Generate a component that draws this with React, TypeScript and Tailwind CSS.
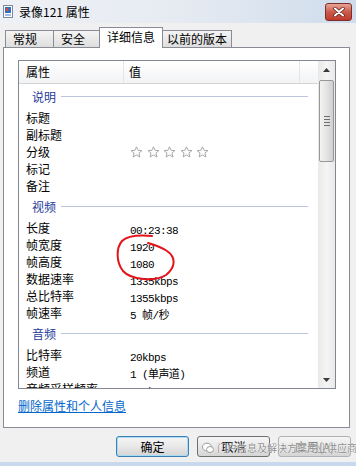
import React from "react";

const mono = "font-['Liberation_Mono','Noto_Sans_CJK_SC',monospace] text-[11px] tracking-[-0.6px]";

function Star() {
  return (
    <svg width="13" height="12" viewBox="0 0 13 12" className="mr-[3.5px]">
      <polygon
        points="6.5,0.8 8.1,4.3 11.9,4.6 9,7.1 9.9,11 6.5,9 3.1,11 4,7.1 1.1,4.6 4.9,4.3"
        fill="#fbfbfb"
        stroke="#a9a9a9"
        strokeWidth="1"
        strokeLinejoin="round"
      />
    </svg>
  );
}

function Group({ label }: { label: string }) {
  return (
    <div className="h-[25px] shrink-0 flex items-center pl-[13px] pr-[10px]">
      <span className="text-[12px] text-[#1e3a9a] leading-none">{label}</span>
      <div className="flex-1 h-px bg-[#b9c6de] ml-[5px]" />
    </div>
  );
}

function Row({ label, value }: { label: string; value?: React.ReactNode }) {
  return (
    <div className="h-[17px] shrink-0 flex items-center">
      <div className="w-[111px] pl-[7px] text-[12px] leading-none">{label}</div>
      <div className="flex-1 leading-none">{value}</div>
    </div>
  );
}

function Btn({ children, main, disabled }: { children: React.ReactNode; main?: boolean; disabled?: boolean }) {
  return (
    <div
      className={
        "w-[73px] h-[21px] rounded-[3px] border flex items-center justify-center text-[12px] bg-linear-to-b from-[#f6f6f6] via-[#e8e8e8] to-[#d4d4d4] " +
        (main
          ? "border-[#3c7fb1] shadow-[inset_0_0_0_1px_#a8dcf5]"
          : disabled
          ? "border-[#adb2b5] text-[#838383]"
          : "border-[#707070]")
      }
    >
      {children}
    </div>
  );
}

export default function App() {
  return (
    <div className="relative w-[356px] h-[466px] overflow-hidden bg-[#f0f0f0] font-['Noto_Sans_CJK_SC',sans-serif] text-black flex flex-col">
      {/* title bar */}
      <div className="h-[23px] shrink-0 flex items-center pl-[3px] pr-[4px] bg-linear-to-r from-[#eef1f5] via-[#e6ebf2] to-[#cfdcec]">
        <svg width="10" height="13" viewBox="0 0 10 13">
          <rect x="0.5" y="0.5" width="9" height="12" fill="#fff" stroke="#7d8a99" />
          <rect x="2" y="2" width="6" height="6" fill="#2f6fc4" />
          <rect x="3" y="3" width="2" height="3" fill="#e04a3a" />
          <rect x="2" y="9.5" width="6" height="1" fill="#4a7fc4" />
        </svg>
        <span className="ml-[6px] text-[12px] leading-none">录像121 属性</span>
        <div className="ml-auto w-[27px] h-[18px] rounded-[3px] border border-[#7a2f2a] bg-linear-to-b from-[#e7a598] via-[#cb5a4c] to-[#c0392b] flex items-center justify-center">
          <svg width="12" height="10" viewBox="0 0 12 10">
            <path d="M2 1.5 L10 8.5 M10 1.5 L2 8.5" stroke="#5a1d18" strokeWidth="3.4" strokeLinecap="round" />
            <path d="M2 1.5 L10 8.5 M10 1.5 L2 8.5" stroke="#fff" strokeWidth="2" strokeLinecap="round" />
          </svg>
        </div>
      </div>

      {/* tabs */}
      <div className="h-[24px] shrink-0 flex items-end pl-[5px] relative z-10">
        <div className="w-[49px] h-[17px] border border-b-0 border-[#898c95] bg-linear-to-b from-[#f4f4f4] to-[#dedede] text-[12px] leading-none flex items-center pl-[7px]">
          常规
        </div>
        <div className="-ml-px w-[47px] h-[17px] border border-b-0 border-[#898c95] bg-linear-to-b from-[#f4f4f4] to-[#dedede] text-[12px] leading-none flex items-center pl-[7px]">
          安全
        </div>
        <div className="-ml-px w-[64px] h-[21px] -mb-px border border-b-0 border-[#898c95] bg-white text-[12px] leading-none flex items-center pl-[7px] pb-[2px] z-10">
          详细信息
        </div>
        <div className="-ml-px w-[70px] h-[17px] border border-b-0 border-[#898c95] bg-linear-to-b from-[#f4f4f4] to-[#dedede] text-[12px] leading-none flex items-center pl-[4px]">
          以前的版本
        </div>
      </div>

      {/* tab page */}
      <div className="ml-[3px] w-[347px] h-[381px] shrink-0 border border-[#898c95] bg-white">
        <div className="ml-[14px] mt-[12px] w-[318px] h-[329px] border border-[#828790] flex">
          <div className="flex-1 flex flex-col overflow-hidden">
            <div className="h-[23px] shrink-0 flex border-b border-[#d5d5d5] bg-linear-to-b from-[#ffffff] to-[#f2f3f5] text-[12px] leading-none">
              <div className="w-[105px] pl-[7px] flex items-center border-r border-[#e3e5e8]">属性</div>
              <div className="w-[176px] pl-[5px] flex items-center border-r border-[#e3e5e8]">值</div>
              <div className="flex-1" />
            </div>
            <Group label="说明" />
            <Row label="标题" />
            <Row label="副标题" />
            <Row
              label="分级"
              value={
                <div className="flex items-center">
                  <Star />
                  <Star />
                  <Star />
                  <Star />
                  <Star />
                </div>
              }
            />
            <Row label="标记" />
            <Row label="备注" />
            <Group label="视频" />
            <Row label="长度" value={<span className={mono}>00:23:38</span>} />
            <Row label="帧宽度" value={<span className={mono}>1920</span>} />
            <Row label="帧高度" value={<span className={mono}>1080</span>} />
            <Row label="数据速率" value={<span className={mono}>1335kbps</span>} />
            <Row label="总比特率" value={<span className={mono}>1355kbps</span>} />
            <Row label="帧速率" value={<span className={mono}>5 帧/秒</span>} />
            <Group label="音频" />
            <Row label="比特率" value={<span className={mono}>20kbps</span>} />
            <Row label="频道" value={<span className={mono}>1 (单声道)</span>} />
            <Row label="音频采样频率" value={<span className={mono}>22 kHz</span>} />
          </div>
          {/* scrollbar */}
          <div className="w-[17px] flex flex-col bg-linear-to-r from-[#e9e9e9] via-[#f5f5f5] to-[#e9e9e9]">
            <div className="h-[17px] flex items-center justify-center">
              <svg width="7" height="4" viewBox="0 0 7 4">
                <polygon points="3.5,0 7,4 0,4" fill="#3a3a3a" />
              </svg>
            </div>
            <div className="mt-[2px] ml-px w-[15px] h-[82px] rounded-[2px] border border-[#979797] bg-linear-to-r from-[#f4f4f4] via-[#e4e4e4] to-[#cfcfcf] flex flex-col items-center justify-center gap-[2px]">
              <div className="w-[6px] h-px bg-[#6f6f6f]" />
              <div className="w-[6px] h-px bg-[#6f6f6f]" />
              <div className="w-[6px] h-px bg-[#6f6f6f]" />
              <div className="w-[6px] h-px bg-[#6f6f6f]" />
            </div>
            <div className="flex-1" />
            <div className="h-[17px] flex items-center justify-center">
              <svg width="7" height="4" viewBox="0 0 7 4">
                <polygon points="0,0 7,0 3.5,4" fill="#3a3a3a" />
              </svg>
            </div>
          </div>
        </div>
        <div className="ml-[14px] mt-[9px] text-[12px] leading-[16px] text-[#0066cc] underline">
          删除属性和个人信息
        </div>
      </div>

      {/* buttons */}
      <div className="mt-[8px] shrink-0 pl-[116px] flex gap-[8px]">
        <Btn main>确定</Btn>
        <Btn>取消</Btn>
        <Btn disabled>应用(A)</Btn>
      </div>
      <div className="mt-[5px] h-[4px] shrink-0 bg-[#c9d9ed]" />

      {/* red hand-drawn mark */}
      <svg className="absolute left-0 top-0 pointer-events-none" width="356" height="466" viewBox="0 0 356 466">
        <path
          d="M152,236 C140,235 128,235 122,241 C116,248 116,262 123,271 C131,280 155,282 166,275 C176,267 176,257 167,251 C161,247 155,245 148,243"
          fill="none"
          stroke="#e3141b"
          strokeWidth="2"
          strokeLinecap="round"
        />
      </svg>

      {/* watermark */}
      <div className="absolute left-[202px] top-[442px] flex items-center whitespace-nowrap pointer-events-none">
        <svg width="12" height="12" viewBox="0 0 12 12">
          <ellipse cx="5" cy="5" rx="4.5" ry="3.8" fill="#fff" stroke="#9a9a9a" />
          <ellipse cx="8" cy="7.5" rx="3.5" ry="3" fill="#fff" stroke="#9a9a9a" />
        </svg>
        <span className="ml-[3px] text-[10px] leading-none text-[rgba(40,40,40,0.55)] [text-shadow:0_0_1px_#fff,0_0_1px_#fff]">
          门户信息及解决方案专业供应商
        </span>
      </div>
    </div>
  );
}
